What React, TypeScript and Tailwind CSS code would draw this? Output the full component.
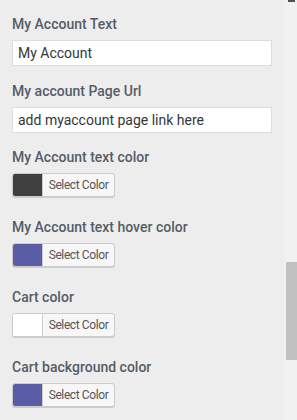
import React from "react";

const font = { fontFamily: "Roboto, 'Noto Sans', sans-serif" };

function Label({ children }: { children: React.ReactNode }) {
  return (
    <div className="h-5 leading-5 text-[14px] font-medium text-[#555d66] whitespace-nowrap">
      {children}
    </div>
  );
}

function TextInput({ value }: { value: string }) {
  return (
    <div className="mt-[6px] h-[26px] w-[260px] border border-[#dddddd] bg-white px-[5px] flex items-center text-[14px] text-[#32373c] whitespace-nowrap overflow-hidden">
      {value}
    </div>
  );
}

function ColorButton({ color }: { color: string }) {
  return (
    <div className="mt-[6px] flex h-6 w-[103px] overflow-hidden rounded-[3px] border border-[#cccccc] bg-[#f7f7f7] shadow-[0_1px_0_#cccccc]">
      <div className="h-full w-[30px] border-r border-[#cccccc]" style={{ backgroundColor: color }} />
      <div className="flex flex-1 items-center justify-center text-[12px] tracking-[-0.4px] text-[#555555] whitespace-nowrap">
        Select Color
      </div>
    </div>
  );
}

export default function App() {
  return (
    <div className="flex h-[420px] w-[297px] overflow-hidden bg-[#ededed]" style={font}>
      <div className="flex w-[284px] flex-col pl-3 pt-[14px]">
        <Label>My Account Text</Label>
        <TextInput value="My Account" />
        <div className="h-[15px]" />
        <Label>My account Page Url</Label>
        <TextInput value="add myaccount page link here" />
        <div className="h-[14px]" />
        <Label>My Account text color</Label>
        <ColorButton color="#3f3f3f" />
        <div className="h-5" />
        <Label>My Account text hover color</Label>
        <ColorButton color="#5b5ca6" />
        <div className="h-5" />
        <Label>Cart color</Label>
        <ColorButton color="#ffffff" />
        <div className="h-5" />
        <Label>Cart background color</Label>
        <ColorButton color="#5b5ca6" />
      </div>
      <div className="flex w-[13px] flex-col bg-[#f1f1f1]">
        <div className="ml-[4px] h-[2px] w-[7px] bg-[#505050]" />
        <div className="h-[260px]" />
        <div className="ml-[2px] h-[98px] w-[11px] bg-[#c1c1c1]" />
      </div>
    </div>
  );
}
